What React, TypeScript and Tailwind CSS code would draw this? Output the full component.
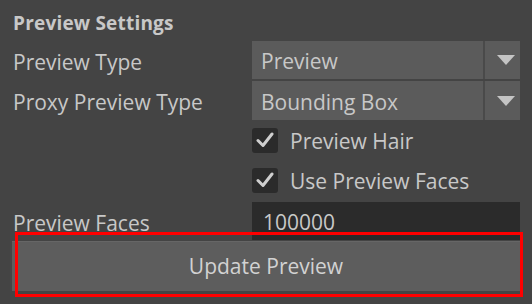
import React from 'react';

function Arrow() {
  return (
    <svg width="18" height="10" viewBox="0 0 18 10">
      <polygon points="0,0 18,0 9,10" fill="#c4c4c4" />
    </svg>
  );
}

function Check() {
  return (
    <svg width="18" height="16" viewBox="0 0 18 16">
      <path d="M2 8.5 L7 13.5 L16 2" stroke="#cfcfcf" strokeWidth="3" fill="none" strokeLinecap="round" strokeLinejoin="round" />
    </svg>
  );
}

function Dropdown({ value }: { value: string }) {
  return (
    <div className="flex-1 flex h-full bg-[#5b5b5b]">
      <div className="flex-1 flex items-center pl-[9px] pt-[3px] text-[21px] leading-none">{value}</div>
      <div className="w-[2px] bg-[#4a4a4a]" />
      <div className="w-[35px] flex items-center justify-end pr-[5px]">
        <Arrow />
      </div>
    </div>
  );
}

export default function App() {
  const labelCls = 'w-[239px] shrink-0 text-[21px] leading-none';
  return (
    <div className="relative w-[532px] h-[304px] bg-[#444444] text-[#c8c8c8] font-['Open_Sans',sans-serif] overflow-hidden">
      <div className="pl-[13px] pr-[12px]">
        <div className="h-[41px] pt-[11px] text-[19px] leading-[24px] font-bold tracking-[0.2px]">Preview Settings</div>

        <div className="flex items-center h-[38px]">
          <div className={labelCls + ' pt-[4px]'}>Preview Type</div>
          <Dropdown value="Preview" />
        </div>
        <div className="flex items-center h-[39px] mt-[2px]">
          <div className={labelCls + ' pt-[3px]'}>Proxy Preview Type</div>
          <Dropdown value="Bounding Box" />
        </div>

        {['Preview Hair', 'Use Preview Faces'].map((t) => (
          <div key={t} className="flex items-center h-[40px]">
            <div className="w-[239px] shrink-0" />
            <div className="w-[26px] h-[25px] rounded-[3px] bg-[#2b2b2b] flex items-center justify-center">
              <Check />
            </div>
            <div className="ml-[12px] text-[21px] leading-none pt-[2px]">{t}</div>
          </div>
        ))}

        <div className="flex items-center h-[38px] mt-[2px]">
          <div className={labelCls + ' pt-[4px]'}>Preview Faces</div>
          <div className="flex-1 h-full bg-[#2b2b2b] flex items-center pl-[11px] pt-[2px] text-[21px] leading-none">100000</div>
        </div>

        <div className="-ml-px h-[50px] mt-px bg-[#5d5d5d] border-t border-[#666666] flex items-center justify-center text-[21px] text-[#d2d2d2]">
          Update Preview
        </div>
      </div>

      <div className="absolute left-[15px] top-[232px] w-[508px] h-[65px] border-[3px] border-[#ff0000]" />
    </div>
  );
}
